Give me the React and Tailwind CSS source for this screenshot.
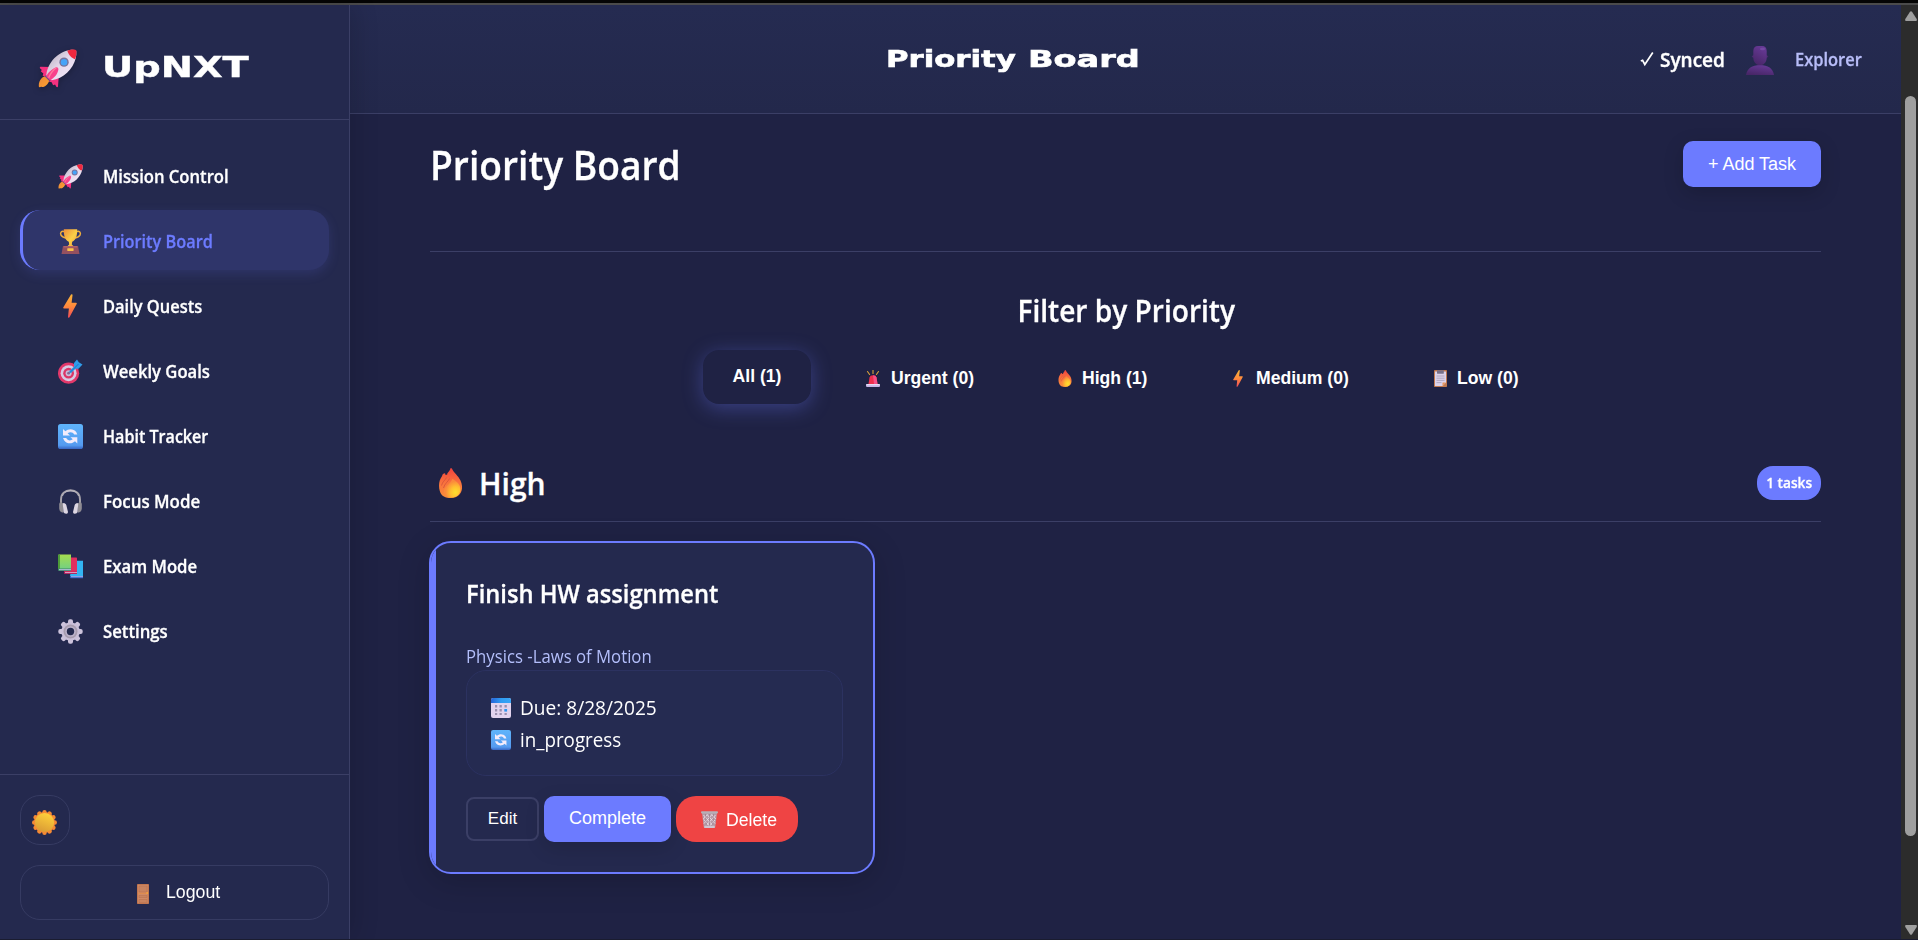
import React from 'react';

function Rocket({ className }) {
  return (
    <svg className={className} viewBox="0 0 40 40">
      <defs>
        <linearGradient id="rk-body" x1="0.2" y1="0.2" x2="0.8" y2="0.8">
          <stop offset="0" stopColor="#c4bccb" />
          <stop offset="0.5" stopColor="#e6d9ec" />
          <stop offset="1" stopColor="#efe4f5" />
        </linearGradient>
        <linearGradient id="rk-fire" x1="0" y1="0" x2="1" y2="1">
          <stop offset="0" stopColor="#e8863a" />
          <stop offset="1" stopColor="#ffa22e" />
        </linearGradient>
      </defs>
      <path d="M10 27.500C6 27 0.500 31 0.800 38.200Q1 39.500 2.500 39C4 38.200 4.500 39.600 6 38.800C9.500 37.500 12.500 33 11.500 29.500Z" fill="url(#rk-fire)" />
      <path d="M14 18.500L2.500 18.200Q1.500 18.400 2 19.800L4 21.500L2.800 22.800L5.500 25L4.800 27.500L10 29Z" fill="#f5317f" />
      <path d="M21.500 26L20.500 38.500Q20 39.800 18.800 38.800L17.500 36.500L15.500 37.300L14 34L11.500 33.500L11 29.500Z" fill="#f5317f" />
      <path d="M8.500 26.500L13.500 31.500L11.800 33L7 28.200Z" fill="#6b4a8c" />
      <path d="M8.500 27C10 13 21 2.500 34 0.800Q39 0.200 39.300 2.500Q39.500 6 38.800 9C36 21 26 30.500 14 32Z" fill="url(#rk-body)" />
      <path d="M30 1.800C33 0.600 38 0 39.200 1.400C39.800 3 39.500 7 38 10.500C34.500 9.500 31.500 6 30 1.800Z" fill="#f0283f" />
      <path d="M19.500 18.500C14 20.500 9.500 24.500 8.500 28.500L12.500 32C17 29.500 20.500 25.500 21 20.300Z" fill="#f8418b" />
      <path d="M19 19C15 22 12.500 25.500 11 29.500" stroke="#ff7a9e" strokeWidth="1.400" fill="none" />
      <circle cx="26.700" cy="13.500" r="4.800" fill="#77749c" />
      <circle cx="26.700" cy="13.500" r="3.300" fill="#46a3f8" />
    </svg>
  );
}

function Trophy({ className }) {
  return (
    <svg className={className} viewBox="0 0 25 25">
      <defs>
        <linearGradient id="tr-cup" x1="0" y1="0" x2="1" y2="1">
          <stop offset="0" stopColor="#ef8f3a" />
          <stop offset="0.55" stopColor="#fbd048" />
          <stop offset="1" stopColor="#f39b3a" />
        </linearGradient>
      </defs>
      <path d="M6.800 2.800C3.500 1.300 1.800 3.800 3 6.200C4 8.200 6 8.600 8.200 9M18.200 2.800C21.500 1.300 23.200 3.800 22 6.200C21 8.200 19 8.600 16.800 9" fill="none" stroke="#f0ad3c" strokeWidth="1.500" />
      <path d="M5.800 0.300H19.200C19.400 6.500 18 11 14.200 12.800L13.800 15.500L16.200 17.800H8.800L11.200 15.500L10.800 12.800C7 11 5.600 6.500 5.800 0.300Z" fill="url(#tr-cup)" />
      <path d="M5 17H20L21.500 25H3.500Z" fill="#94505f" />
      <path d="M6 17H19L19.400 18.500H5.600Z" fill="#b0616a" />
      <rect x="9.300" y="19.200" width="6.300" height="2.800" rx="0.400" fill="#fbc348" />
    </svg>
  );
}

function Bolt({ className }) {
  return (
    <svg className={className} viewBox="0 0 14 24">
      <defs>
        <linearGradient id="bolt-g" x1="0" y1="0" x2="0" y2="1">
          <stop offset="0" stopColor="#f7b53a" />
          <stop offset="0.5" stopColor="#ff8a3c" />
          <stop offset="1" stopColor="#ef4a58" />
        </linearGradient>
      </defs>
      <path d="M8 0.500Q9.800 -0.500 9.500 1.500L8.600 8.800H13Q14.300 9 13.500 10.300L6.500 23.200Q5 24.600 5 22.800L5.900 14.500H1Q-0.300 14.300 0.500 13Z" fill="url(#bolt-g)" />
    </svg>
  );
}

function Target({ className }) {
  return (
    <svg className={className} viewBox="0 0 25 25">
      <circle cx="10.600" cy="14.200" r="10.600" fill="#e3386a" />
      <circle cx="10.600" cy="14.200" r="8" fill="#d6cbe4" />
      <circle cx="10.600" cy="14.200" r="5.400" fill="#dc3767" />
      <circle cx="10.600" cy="14.200" r="3" fill="#c9bddb" />
      <circle cx="10.600" cy="14.200" r="1.400" fill="#8a6a90" />
      <path d="M11 12.500L16 7.500V4L19 0.400L20.800 3.200L24.500 5.600L20.500 9.800H17.500L12.800 14.200Z" fill="#2f9be8" />
      <path d="M12 13.500L20.500 5" stroke="#1670c8" strokeWidth="0.900" />
    </svg>
  );
}

function Cycle({ className }) {
  return (
    <svg className={className} viewBox="0 0 25 25">
      <defs>
        <linearGradient id="cy-g" x1="0" y1="0" x2="0" y2="1">
          <stop offset="0" stopColor="#5fb4fb" />
          <stop offset="0.85" stopColor="#559bf0" />
          <stop offset="1" stopColor="#3766c4" />
        </linearGradient>
      </defs>
      <rect width="25" height="25" rx="2.600" fill="url(#cy-g)" />
      <path d="M5 5L7.400 7.300C10 4.700 15.500 4.400 18.200 8L19.300 10.500H16.200C14.800 7.700 11.700 7.600 9.600 9.300L12 11.500H5Z" fill="#f3ecfb" />
      <path d="M19.300 19.500L17 17.300C14.300 20 9 20.200 6.200 16.500L5 14H8.200C9.600 16.900 12.700 17 14.800 15.300L12.400 13.200H19.300Z" fill="#f3ecfb" />
    </svg>
  );
}

function Headphones({ className }) {
  return (
    <svg className={className} viewBox="0 0 25 25">
      <path d="M3 15V10.500C3 4.500 7 1.200 12.500 1.200S22 4.500 22 10.500V15" fill="none" stroke="#a9a5ad" strokeWidth="1.900" />
      <path d="M4.500 7C6 3.200 9 2 12.500 2S19 3.200 20.500 7" fill="none" stroke="#d5d1da" strokeWidth="0.700" />
      <path d="M1.200 15Q1.200 12.800 3.200 13.200L5 14.200L5.500 23.500H4Q1.200 22.500 1.200 19Z" fill="#8f8c93" />
      <path d="M23.800 15Q23.800 12.800 21.800 13.200L20 14.200L19.500 23.500H21Q23.800 22.500 23.800 19Z" fill="#8f8c93" />
      <path d="M4.800 15Q5 13.800 6.500 14.200Q8 14.600 8.300 16L10 23Q10 24.500 8.500 24.800Q6 25 5.500 23Z" fill="#ddd6e2" />
      <path d="M20.200 15Q20 13.800 18.500 14.200Q17 14.600 16.700 16L15 23Q15 24.500 16.500 24.800Q19 25 19.500 23Z" fill="#ddd6e2" />
    </svg>
  );
}

function Books({ className }) {
  return (
    <svg className={className} viewBox="0 0 25 25">
      <defs>
        <linearGradient id="bk-g" x1="0" y1="0" x2="0" y2="1">
          <stop offset="0" stopColor="#a6dc4e" />
          <stop offset="1" stopColor="#6fcf86" />
        </linearGradient>
      </defs>
      <path d="M14 7.500Q14 6.800 15 6.800H25V24H13L12 22.500Z" fill="#33b5f3" />
      <path d="M12 22H25V24.200H12.500Q11.500 23.200 12 22Z" fill="#2f63c8" />
      <path d="M13 22.300H25V23.200H13Z" fill="#b9bff2" />
      <path d="M8 3.500H18.300Q19 3.600 19 4.300V19.500H6Z" fill="#e02f5f" />
      <path d="M6 17.800H19V20H6.500Q5.500 19 6 17.800Z" fill="#a81f58" />
      <path d="M7 18.200H19V19.100H7Z" fill="#e4b9dd" />
      <path d="M0 1.500Q0 0.500 1.200 0.500H13V16H0Z" fill="url(#bk-g)" />
      <path d="M0 1.500Q0 0.500 1.200 0.500H2V15H0Z" fill="#4e9c3a" />
      <path d="M0 14.500H13V17H1Q0 16.900 0 16Z" fill="#3c8466" />
      <path d="M1 15.200H13V16.200H1Z" fill="#bfc6e8" />
    </svg>
  );
}

const TEETH = [0, 45, 90, 135, 180, 225, 270, 315];

function Gear({ className }) {
  return (
    <svg className={className} viewBox="0 0 25 25">
      {TEETH.map((a) => (
        <rect key={a} x="10" y="0.300" width="5" height="6" rx="2" fill="#cdc3dc" transform={`rotate(${a} 12.500 12.500)`} />
      ))}
      <circle cx="12.500" cy="12.500" r="9.300" fill="#cabfd9" />
      <circle cx="12.500" cy="12.500" r="7" fill="#a79caf" />
      <circle cx="12.500" cy="12.500" r="5.200" fill="#bdb2cb" />
      <circle cx="12.500" cy="12.500" r="3.700" fill="#24294e" />
    </svg>
  );
}

const RAYS = [0, 30, 60, 90, 120, 150, 180, 210, 240, 270, 300, 330];

function Sun({ className }) {
  return (
    <svg className={className} viewBox="0 0 25 25">
      <defs>
        <linearGradient id="sun-g" x1="0.7" y1="0" x2="0.300" y2="1">
          <stop offset="0" stopColor="#ffd23b" />
          <stop offset="1" stopColor="#d99a35" />
        </linearGradient>
      </defs>
      {RAYS.map((a) => (
        <circle key={a} cx="12.500" cy="2.200" r="2.200" fill="#f58a34" transform={`rotate(${a} 12.500 12.500)`} />
      ))}
      <circle cx="12.500" cy="12.500" r="10.600" fill="#f58a34" />
      <circle cx="12.500" cy="12.500" r="9.600" fill="url(#sun-g)" />
    </svg>
  );
}

function Door({ className }) {
  return (
    <svg className={className} viewBox="0 0 12 20">
      <rect width="12" height="20" rx="0.800" fill="#c2764f" />
      <rect x="1" y="1" width="9.800" height="18" fill="#cf8a66" />
      <path d="M2 2H10V8H2ZM2 11.500H10V13.500H2ZM2 15.500H10V18.500H2Z" fill="#c98460" stroke="#b96f4c" strokeWidth="0.500" />
      <path d="M1 9.300H11" stroke="#e08b4a" strokeWidth="1" />
      <circle cx="10.200" cy="9" r="0.900" fill="#f6a43a" />
    </svg>
  );
}

function Person({ className }) {
  return (
    <svg className={className} viewBox="0 0 28 29">
      <defs>
        <linearGradient id="ps-g" x1="0.700" y1="0" x2="0.300" y2="1">
          <stop offset="0" stopColor="#683a97" />
          <stop offset="1" stopColor="#472667" />
        </linearGradient>
      </defs>
      <path d="M0 29C1 22.500 6 19 14 19S27 22.500 28 29Z" fill="url(#ps-g)" />
      <ellipse cx="14" cy="10.500" rx="8.300" ry="2" fill="#4a2a6e" />
      <path d="M7.300 5Q7.500 0 12 0H16Q20.500 0 20.700 5V12C20.500 16.500 17.500 19.300 14 19.300S7.500 16.500 7.300 12Z" fill="url(#ps-g)" />
      <ellipse cx="16.500" cy="3" rx="2.600" ry="1.300" fill="#7b50ab" opacity="0.700" />
    </svg>
  );
}

function Siren({ className }) {
  return (
    <svg className={className} viewBox="0 0 14 17">
      <path d="M7 0.300V3.500M1.500 1.500L3.600 4.500M12.500 1.500L10.400 4.500" stroke="#d9a13b" strokeWidth="1.100" strokeLinecap="round" />
      <path d="M2.500 14L3.500 7.500Q4 5.300 7 5.300T10.500 7.500L11.500 14Z" fill="#ee2f4c" />
      <path d="M7 5.300Q10 5.300 10.500 7.500L11.500 14H8Z" fill="#f94f86" />
      <rect x="0" y="14" width="14" height="2.900" rx="0.800" fill="#c6b7e6" />
      <rect x="0.500" y="14" width="13" height="1.200" fill="#e6dcf5" />
    </svg>
  );
}

function Flame({ className }) {
  return (
    <svg className={className} viewBox="0 0 23 30">
      <defs>
        <linearGradient id="fl-a" x1="0.500" y1="0" x2="0.500" y2="1">
          <stop offset="0" stopColor="#f0423f" />
          <stop offset="0.500" stopColor="#f9743d" />
          <stop offset="1" stopColor="#f98c3a" />
        </linearGradient>
        <radialGradient id="fl-b" cx="0.700" cy="0.720" r="0.600">
          <stop offset="0" stopColor="#ffe02e" />
          <stop offset="0.500" stopColor="#ffc030" />
          <stop offset="1" stopColor="#fb8b3b" />
        </radialGradient>
      </defs>
      <path d="M11.500 0.200Q12.300 -0.200 13 0.800C15 5 19 7.500 21.500 12.500C24 18 23.500 23.500 20 27Q17 30 12 30C6.500 30 2.500 28.500 0.800 23C-0.800 17.500 0.200 12 2.800 8.500Q3.500 5.500 5.200 5.300Q6.600 5.300 6.500 7L8.300 6.500Q8 5.500 9 4.500C10.300 3.200 11 1.800 11.500 0.200Z" fill="url(#fl-a)" />
      <path d="M13.500 11C17 13 21.500 16 21.500 21.500C21 27 17 29.500 12.500 29.500C8 29.500 5 27.500 5 23.500C5 18.500 10.500 17 13.500 11Z" fill="url(#fl-b)" />
      <path d="M2.500 17.500C3.500 13.500 6 12.500 7.500 9.500M4.500 20C5.500 15.500 9 14 10.500 10.500" stroke="#d8553c" strokeWidth="0.900" fill="none" />
    </svg>
  );
}

function Clipboard({ className }) {
  return (
    <svg className={className} viewBox="0 0 13 17">
      <rect width="13" height="17" rx="0.800" fill="#c0794f" />
      <path d="M1 1.500H12V12.500L8.500 16H1Z" fill="#dcd3ea" />
      <path d="M12 12.500H8.500V16Z" fill="#e6965f" />
      <path d="M3 0.300H9.800V3.200Q9.800 3.800 9 3.800H4Q3 3.800 3 3.200Z" fill="#77718a" />
      <path d="M2.500 6H10.500M2.500 8.200H10.500M2.500 10.400H10.500M2.500 12.600H7.500" stroke="#a79db8" strokeWidth="0.800" />
    </svg>
  );
}

function Calendar({ className }) {
  return (
    <svg className={className} viewBox="0 0 20 20">
      <defs>
        <linearGradient id="ca-g" x1="0" y1="0" x2="1" y2="0">
          <stop offset="0" stopColor="#2563d8" />
          <stop offset="0.500" stopColor="#2f9bf2" />
          <stop offset="1" stopColor="#3aa5f5" />
        </linearGradient>
      </defs>
      <rect width="20" height="20" rx="2" fill="#e2d3ee" />
      <path d="M0 5V2Q0 0 2 0H18Q20 0 20 2V5Z" fill="url(#ca-g)" />
      <path d="M4 7H6.200V9.500H4ZM8.500 7H10.800V9.500H8.500ZM13.500 7H15.800V9.500H13.500ZM4 11H6.200V13.500H4ZM8.500 11H10.800V13.500H8.500ZM4 15H6.200V17H4ZM8.500 15H10.800V17H8.500ZM13.500 15H15.800V17H13.500Z" fill="#9a8fae" />
      <rect x="13.300" y="11" width="2.800" height="2.600" fill="#2f93ee" />
    </svg>
  );
}

function Bin({ className }) {
  return (
    <svg className={className} viewBox="0 0 17 17">
      <path d="M1 2H16L14.300 15.800Q14.200 17 13 17H4Q2.800 17 2.700 15.800Z" fill="#b79aa6" />
      <path d="M2.500 4L13 16M6 3.500L14 12.500M10.500 3.500L14.800 8M2.800 8.500L9.500 16M14.500 4L4 16M11 3.500L3 12.500M6.500 3.500L2.300 8M14 9L7.500 16" stroke="#eadde6" strokeWidth="0.900" />
      <path d="M4.500 3L5.500 16M8.500 3V16M12.500 3L11.500 16" stroke="#8d6f7d" strokeWidth="0.500" />
      <rect x="0" y="0.300" width="17" height="2.300" rx="1" fill="#b5b0b8" />
      <rect x="3.200" y="15" width="10.600" height="2" rx="0.800" fill="#cfc6d2" />
    </svg>
  );
}

const NAV = [
  { label: 'Mission Control', Icon: Rocket, size: 'h-[25px] w-[25px]', fit: 'scale-x-[0.945]' },
  { label: 'Priority Board', Icon: Trophy, size: 'h-[25px] w-[25px]', fit: 'scale-x-[0.926]', active: true },
  { label: 'Daily Quests', Icon: Bolt, size: 'h-6 w-[14px]', fit: 'scale-x-[0.935]' },
  { label: 'Weekly Goals', Icon: Target, size: 'h-[25px] w-[25px]', fit: 'scale-x-[0.946]' },
  { label: 'Habit Tracker', Icon: Cycle, size: 'h-[25px] w-[25px]', fit: 'scale-x-[0.915]' },
  { label: 'Focus Mode', Icon: Headphones, size: 'h-[25px] w-[25px]', fit: 'scale-x-[0.960]' },
  { label: 'Exam Mode', Icon: Books, size: 'h-[25px] w-[25px]', fit: 'scale-x-[0.950]' },
  { label: 'Settings', Icon: Gear, size: 'h-[25px] w-[25px]', fit: 'scale-x-[0.950]' },
];

function Sidebar() {
  return (
    <aside className="relative z-10 flex w-[350px] shrink-0 flex-col border-r border-[#3b3f66] bg-[#24294e] shadow-[4px_0_24px_rgba(0,0,0,0.14)]">
      <div className="flex h-[115px] shrink-0 items-center border-b border-[#3b3f66] pl-[38px]">
        <Rocket className="mt-[13px] h-[39px] w-[39px] drop-shadow-[0_2px_3px_rgba(0,0,0,0.25)]" />
        <span className="mt-[11px] ml-[25px] origin-left scale-x-[1.335] font-['DejaVu_Sans',sans-serif] text-[28.800px] leading-none font-bold text-white [-webkit-text-stroke:0.4px]">UpNXT</span>
      </div>
      <nav className="flex flex-1 flex-col gap-[5px] px-5 pt-[25px]">
        {NAV.map(({ label, Icon, size, fit, active }) => (
          <a
            key={label}
            className={
              active
                ? 'flex h-[60px] items-center rounded-[20px] border-l-[3px] border-[#6c7bff] bg-[#2f356a] pl-[33px] text-[#6c7bff] shadow-[0_4px_12px_rgba(108,123,255,0.15)]'
                : 'flex h-[60px] items-center pl-9 text-white'
            }
          >
            <span className="flex w-[28px] justify-center pt-0.5">
              <Icon className={size} />
            </span>
            <span className={`mt-[3px] ml-[19px] origin-left text-[17.600px] leading-none font-semibold whitespace-nowrap [-webkit-text-stroke:0.3px] ${fit}`}>{label}</span>
          </a>
        ))}
      </nav>
      <div className="flex h-[165px] shrink-0 flex-col gap-5 border-t border-[#3b3f66] px-5 pt-5">
        <button className="flex h-[50px] w-[50px] items-center justify-center rounded-[20px] border border-[#363b62]">
          <Sun className="mt-[5px] -ml-px h-[25px] w-[25px]" />
        </button>
        <button className="flex h-[55px] w-[309px] shrink-0 items-center rounded-[20px] border border-[#363b62] pb-0.5 pl-[116px] font-['Liberation_Sans',sans-serif] text-lg leading-none text-white">
          <Door className="mt-1 mr-[17px] h-5 w-3" />
          <span className="origin-left scale-x-[0.985]">Logout</span>
        </button>
      </div>
    </aside>
  );
}

function Header() {
  return (
    <header className="flex h-[109px] shrink-0 items-center border-b border-[#3b3f66] bg-gradient-to-b from-[#252b51] to-[#23284b]">
      <div className="flex w-[1290px] pl-[536px] font-['DejaVu_Sans',sans-serif] text-[23.300px] leading-none font-bold text-white">
        <h2 className="flex [-webkit-text-stroke:0.6px]">
          <span className="w-[142px] origin-left scale-x-[1.320]">Priority</span>
          <span className="origin-left scale-x-[1.440]">Board</span>
        </h2>
      </div>
      <svg className="mt-px h-[15px] w-[15px]" viewBox="0 0 15 15">
        <path d="M0.800 9L2.600 8.300L4.800 12.500L12.800 0.500" fill="none" stroke="#fff" strokeWidth="1.700" />
      </svg>
      <span className="mt-0.5 ml-[5px] w-[66px] origin-left scale-x-[0.950] text-xl leading-none font-semibold text-white [-webkit-text-stroke:0.4px]">Synced</span>
      <Person className="mt-0.5 ml-5 h-[29px] w-7" />
      <span className="mt-0.5 ml-[21px] origin-left scale-x-[0.935] text-[17.600px] leading-none font-semibold text-[#b8bdf8] [-webkit-text-stroke:0.3px]">Explorer</span>
    </header>
  );
}

function Filters() {
  const base = "flex h-[54px] items-center rounded-[16px] font-['Liberation_Sans',sans-serif] text-[17.600px] leading-none font-bold text-white whitespace-nowrap";
  return (
    <div className="mt-5 flex gap-6 pl-[273px]">
      <button className={`${base} w-[108px] justify-center shadow-[0_4px_20px_rgba(108,123,255,0.35)]`}>All (1)</button>
      <button className={`${base} w-[168px] pt-[3px] pl-[31px]`}>
        <Siren className="mr-[11px] h-[17px] w-[14px]" />
        Urgent (0)
      </button>
      <button className={`${base} w-[150px] pt-[3px] pl-[31px]`}>
        <Flame className="mr-[10px] h-[17px] w-[14px]" />
        High (1)
      </button>
      <button className={`${base} w-[177px] pt-[3px] pl-8`}>
        <Bolt className="mr-[13px] h-[17px] w-[10px]" />
        Medium (0)
      </button>
      <button className={`${base} w-[146px] pt-[3px] pl-8`}>
        <Clipboard className="mr-[10px] h-[17px] w-[13px]" />
        Low (0)
      </button>
    </div>
  );
}

function TaskCard() {
  return (
    <article className="mt-[19px] -ml-px flex h-[333px] w-[446px] overflow-hidden rounded-[22px] border-2 border-[#6c7bff] bg-[#24294e] shadow-[0_8px_32px_rgba(0,0,0,0.18)]">
      <div className="w-[5px] shrink-0 bg-[#6c7bff]" />
      <div className="flex flex-col pt-[33px] pl-[30px]">
        <h3 className="w-[251px] origin-left scale-x-[0.948] text-[25px] leading-[34px] font-semibold whitespace-nowrap text-white [-webkit-text-stroke:0.3px]">Finish HW assignment</h3>
        <p className="mt-8 w-[185px] origin-left scale-x-[0.930] text-lg leading-7 whitespace-nowrap text-[#b3befa]">Physics -Laws of Motion</p>
        <div className="h-[106px] w-[377px] rounded-[20px] border border-[#2c3260] bg-[#252b51] pt-5 pl-6 text-xl leading-8 text-white">
          <div className="flex items-center">
            <Calendar className="mt-0.5 mr-[9px] h-5 w-5" />
            <span className="mt-px -mb-px origin-left scale-x-[0.955]">Due: 8/28/2025</span>
          </div>
          <div className="flex items-center">
            <Cycle className="mt-0.5 mr-[9px] h-5 w-5" />
            <span className="mt-px -mb-px origin-left scale-x-[0.938]">in_progress</span>
          </div>
        </div>
        <div className="mt-5 flex items-center gap-[5px] font-['Liberation_Sans',sans-serif] text-lg leading-none text-white">
          <button className="h-11 w-[73px] rounded-lg border-2 border-[#3b3f66] pb-0.5 text-[17px]">Edit</button>
          <button className="h-[46px] w-[127px] rounded-[10px] bg-[#6c7bff] pb-[3px] shadow-[0_6px_20px_rgba(0,0,0,0.14)]">Complete</button>
          <button className="flex h-[46px] w-[122px] items-center rounded-[20px] bg-[#ef4444] pt-px pl-[25px]">
            <Bin className="mr-2 h-[17px] w-[17px]" />
            <span className="origin-left scale-x-[0.980]">Delete</span>
          </button>
        </div>
      </div>
    </article>
  );
}

function Scrollbar() {
  return (
    <div className="flex w-[17px] shrink-0 flex-col items-center bg-[#2c2c2c]">
      <svg className="mt-1.5 ml-0.5 h-[10px] w-3 shrink-0" viewBox="0 0 12 10">
        <path d="M5 0.800Q6 -0.400 7 0.800L11.700 8Q12.300 9.800 11 10H1Q-0.300 9.800 0.300 8Z" fill="#9f9f9f" />
      </svg>
      <div className="mt-[75px] ml-0.5 h-[740px] w-[11px] shrink-0 rounded-full bg-[#9f9f9f]" />
      <svg className="mt-[89px] ml-0.5 h-[10px] w-3 shrink-0" viewBox="0 0 12 10">
        <path d="M5 9.200Q6 10.400 7 9.200L11.700 2Q12.300 0.200 11 0H1Q-0.300 0.200 0.300 2Z" fill="#9f9f9f" />
      </svg>
    </div>
  );
}

export default function App() {
  return (
    <div className="flex h-[940px] w-[1918px] flex-col overflow-hidden border-b border-[#1a1c30] bg-[#1f2244] font-['Open_Sans',sans-serif]">
      <div className="h-[5px] shrink-0 border-b-2 border-[#4b4b4b] bg-[#050505]" />
      <div className="flex min-h-0 flex-1">
        <Sidebar />
        <div className="flex min-w-0 flex-1 flex-col">
          <Header />
          <main className="flex flex-1 flex-col bg-[#1f2244] px-20 pt-[27px]">
            <div className="flex h-[111px] items-start justify-between border-b border-[#3b3f66]">
              <h1 className="origin-left scale-x-[0.930] text-[40px] leading-[48px] font-semibold text-white [-webkit-text-stroke:0.3px]">Priority Board</h1>
              <button className="h-[46px] w-[138px] rounded-[10px] bg-[#6c7bff] font-['Liberation_Sans',sans-serif] text-lg leading-none text-white shadow-[0_6px_20px_rgba(0,0,0,0.18)]">+ Add Task</button>
            </div>
            <h2 className="mt-[39px] -mb-px self-center text-[30px] leading-10 font-semibold text-white [-webkit-text-stroke:0.3px]">
              <span className="ml-px inline-block scale-x-[0.936]">Filter by Priority</span>
            </h2>
            <Filters />
            <div className="mt-[62px] flex h-14 shrink-0 items-start justify-between border-b border-[#3b3f66]">
              <div className="flex">
                <Flame className="mt-0.5 ml-[9px] h-[30px] w-[23px]" />
                <h2 className="ml-[17px] text-[30px] leading-[35px] font-semibold text-white [-webkit-text-stroke:0.3px]">High</h2>
              </div>
              <span className="flex h-[34px] w-16 items-center justify-center rounded-[16px] bg-[#6c7bff] pt-px text-[14.400px] leading-none font-semibold whitespace-nowrap text-white [-webkit-text-stroke:0.3px]">
                <span className="scale-x-[0.950]">1 tasks</span>
              </span>
            </div>
            <TaskCard />
          </main>
        </div>
        <Scrollbar />
      </div>
    </div>
  );
}
